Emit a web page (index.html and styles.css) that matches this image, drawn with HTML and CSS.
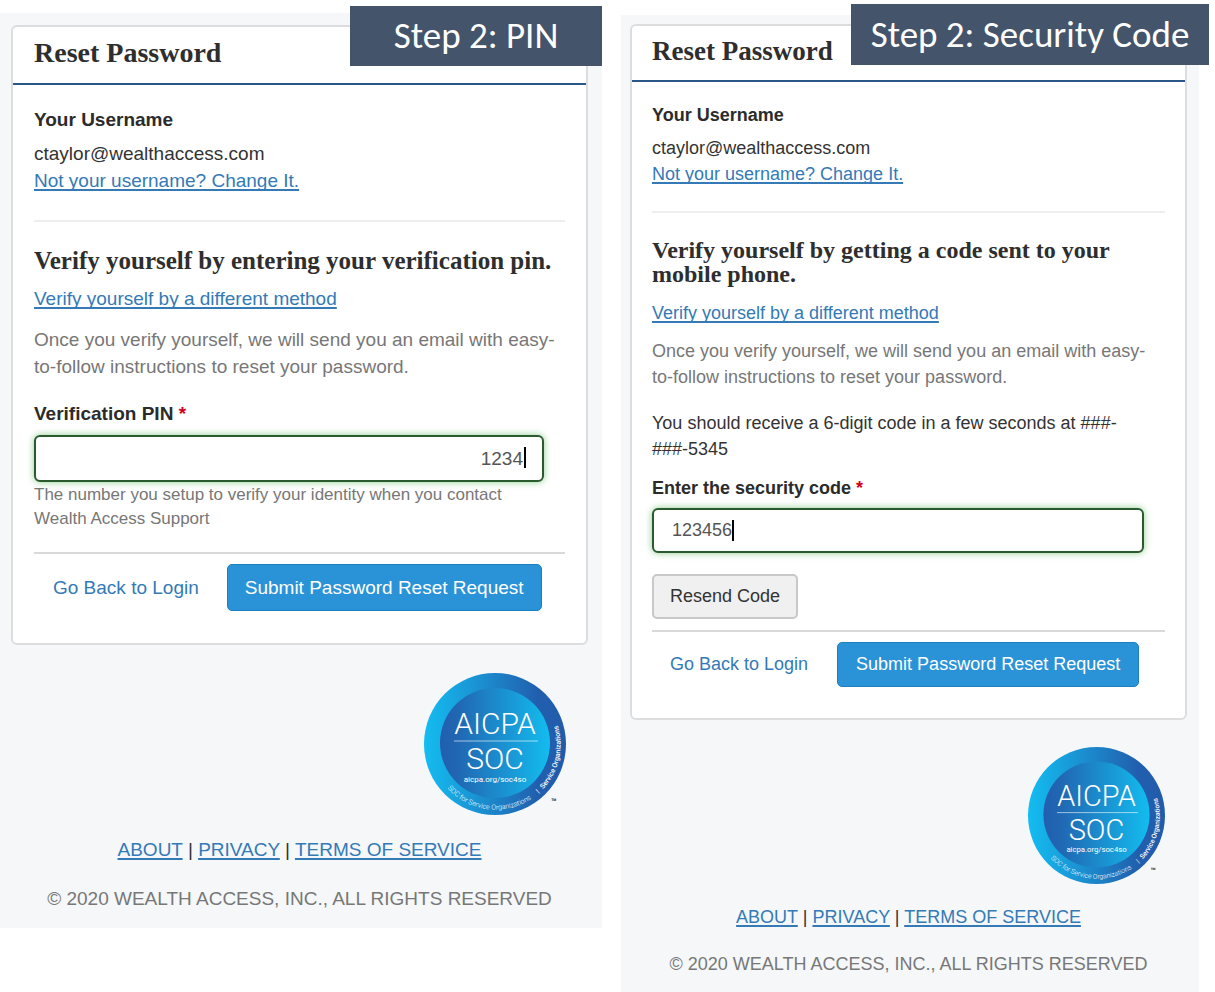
FILE: index.html
```html
<!DOCTYPE html>
<html lang="en">
  <head>
    <meta charset="utf-8">
    <title>Reset Password</title>
    <link rel="stylesheet" href="styles.css">
  </head>
  <body>

    <svg class="defs" aria-hidden="true">
      <defs>
        <linearGradient id="seal-ring">
          <stop offset="0" stop-color="#13bdf1" />
          <stop offset="0.4" stop-color="#1b8fd0" />
          <stop offset="0.8" stop-color="#215fae" />
          <stop offset="1" stop-color="#215cab" />
        </linearGradient>
        <linearGradient id="seal-core">
          <stop offset="0" stop-color="#215fae" />
          <stop offset="0.15" stop-color="#2166b2" />
          <stop offset="1" stop-color="#13bcef" />
        </linearGradient>
        <path id="seal-arc" d="M23.5 115.3 A65 65 0 0 0 130 43" />
        <symbol id="seal" viewBox="0 0 142 142">
          <circle cx="71" cy="71" r="71" fill="url(#seal-ring)" />
          <circle cx="71" cy="70" r="55" fill="url(#seal-core)" />
          <g fill="#fff" font-family="Roboto, sans-serif" text-anchor="middle">
            <text x="71" y="61" font-size="30" font-weight="300">AICPA</text>
            <path d="M30 68h84" stroke="#fff" stroke-opacity="0.6" />
            <text x="71" y="96" font-size="30" font-weight="300">SOC</text>
            <text x="71" y="109" font-size="8">aicpa.org/soc4so</text>
          </g>
          <g fill="#fff" font-family="Roboto, sans-serif" font-size="7">
            <text font-weight="300"><textPath href="#seal-arc">SOC for Service Organizations</textPath></text>
            <text><textPath href="#seal-arc" startOffset="101">|</textPath></text>
            <text font-weight="500"><textPath href="#seal-arc" startOffset="107">Service Organizations</textPath></text>
          </g>
          <text x="127" y="132" fill="#222" font-family="Roboto, sans-serif" font-size="9" font-weight="500">™</text>
        </symbol>
      </defs>
    </svg>

    <main class="steps">

      <section class="panel panel-pin">
        <div class="step-label">Step 2: PIN</div>
        <form class="card">
          <h1 class="card-title">Reset Password</h1>
          <div class="card-body">
            <div class="label">Your Username</div>
            <div class="username">ctaylor@wealthaccess.com</div>
            <a href="#">Not your username? Change It.</a>
            <hr class="divider">
            <h2 class="heading">Verify yourself by entering your verification pin.</h2>
            <a href="#">Verify yourself by a different method</a>
            <p class="muted">Once you verify yourself, we will send you an email with easy-to-follow instructions to reset your password.</p>
            <label class="label" for="pin">Verification PIN <span class="required">*</span></label>
            <div class="field">
              <input class="input" id="pin" type="text" value="1234">
              <span class="caret"></span>
            </div>
            <p class="help">The number you setup to verify your identity when you contact Wealth Access Support</p>
            <div class="actions">
              <a class="button button-link" href="#">Go Back to Login</a>
              <button class="button button-primary" type="button">Submit Password Reset Request</button>
            </div>
          </div>
        </form>
        <svg class="seal" role="img" aria-label="AICPA SOC"><use href="#seal" /></svg>
        <footer class="footer">
          <div><a href="#">ABOUT</a> | <a href="#">PRIVACY</a> | <a href="#">TERMS OF SERVICE</a></div>
          <div class="copyright">© 2020 WEALTH ACCESS, INC., ALL RIGHTS RESERVED</div>
        </footer>
      </section>

      <section class="panel panel-code">
        <div class="step-label">Step 2: Security Code</div>
        <form class="card">
          <h1 class="card-title">Reset Password</h1>
          <div class="card-body">
            <div class="label">Your Username</div>
            <div class="username">ctaylor@wealthaccess.com</div>
            <a href="#">Not your username? Change It.</a>
            <hr class="divider">
            <h2 class="heading">Verify yourself by getting a code sent to your mobile phone.</h2>
            <a href="#">Verify yourself by a different method</a>
            <p class="muted">Once you verify yourself, we will send you an email with easy-to-follow instructions to reset your password.</p>
            <p class="notice">You should receive a 6-digit code in a few seconds at ###-###-5345</p>
            <label class="label" for="code">Enter the security code <span class="required">*</span></label>
            <div class="field">
              <input class="input" id="code" type="text" value="123456">
              <span class="caret"></span>
            </div>
            <button class="button button-default" type="button">Resend Code</button>
            <div class="actions">
              <a class="button button-link" href="#">Go Back to Login</a>
              <button class="button button-primary" type="button">Submit Password Reset Request</button>
            </div>
          </div>
        </form>
        <svg class="seal" role="img" aria-label="AICPA SOC"><use href="#seal" /></svg>
        <footer class="footer">
          <div><a href="#">ABOUT</a> | <a href="#">PRIVACY</a> | <a href="#">TERMS OF SERVICE</a></div>
          <div class="copyright">© 2020 WEALTH ACCESS, INC., ALL RIGHTS RESERVED</div>
        </footer>
      </section>

    </main>

  </body>
</html>
```
FILE: styles.css
```css
* {
  box-sizing: border-box;
}

body {
  margin: 0;
  background: #fff;
  color: #333;
  font-family: "Liberation Sans", Arial, sans-serif;
}

h1, h2, p {
  margin: 0;
}

a {
  color: #337ab7;
  text-decoration: underline;
  text-decoration-thickness: 2px;
  text-decoration-skip-ink: none;
  text-underline-offset: 2px;
}

.defs {
  position: absolute;
  width: 0;
  height: 0;
}

.steps {
  display: grid;
  grid-template-columns: 602fr 578fr;
  align-items: start;
  column-gap: 19px;
  padding-right: 16px;
}

.panel {
  position: relative;
  display: flex;
  flex-direction: column;
  background: #f5f7f9;
}

.panel-pin {
  margin-top: 13px;
  padding: 12px 14px 16px 11px;
  font-size: 19px;
  line-height: 27px;
}

.panel-code {
  margin-top: 15px;
  padding: 9px 12px 16px 9px;
  font-size: 18px;
  line-height: 26px;
}

/* banner over the top right corner of each panel */
.step-label {
  position: absolute;
  top: -7px;
  right: 0;
  width: 252px;
  background: #44546a;
  color: #fff;
  font-family: Carlito, "Open Sans", sans-serif;
  font-size: 37px;
  line-height: 60px;
  text-align: center;
}

.panel-code .step-label {
  top: -11px;
  right: -10px;
  width: 358px;
  line-height: 61px;
}

.card {
  background: #fff;
  border: 2px solid #dcdddf;
  border-radius: 6px;
}

.card-title {
  padding: 0 21px 4px;
  border-bottom: 2px solid #2a5788;
  color: #2e2e2e;
  font-family: "Liberation Serif", serif;
  font-size: 28px;
  line-height: 52px;
}

.panel-code .card-title {
  padding: 0 20px 4px;
  font-size: 27px;
  line-height: 50px;
}

.card-body {
  padding: 21px 21px 32px;
}

.panel-code .card-body {
  padding: 20px 20px 31px;
}

.label {
  display: block;
  font-weight: bold;
  color: #2b2b2b;
}

.username {
  margin-top: 7px;
}

.required {
  color: #d0021b;
}

.divider {
  height: 2px;
  margin: 26px 0;
  border: 0;
  background: #eee;
}

.panel-code .divider {
  margin: 24px 0 25px;
}

.heading {
  margin-bottom: 12px;
  color: #2e2e2e;
  font-family: "Liberation Serif", serif;
  font-size: 25px;
  line-height: 25px;
}

.panel-code .heading {
  margin-bottom: 14px;
  font-size: 24px;
  line-height: 24px;
}

.muted,
.help,
.copyright {
  color: #777;
}

.muted {
  margin: 14px 0 20px;
}

.panel-code .muted {
  margin: 12px 0 20px;
}

.notice {
  margin-bottom: 13px;
}

.field {
  position: relative;
  margin: 8px 21px 0 0;
}

.panel-code .field {
  margin-top: 7px;
}

.input {
  display: block;
  width: 100%;
  height: 47px;
  padding: 0 19px;
  border: 2px solid #2a5a2e;
  border-radius: 6px;
  background: #fff;
  box-shadow: 0 0 7px rgba(60, 170, 60, 0.6);
  color: #555;
  font: inherit;
}

.panel-pin .input {
  text-align: right;
}

.panel-code .input {
  height: 45px;
  padding: 0 18px;
}

.caret {
  position: absolute;
  top: 12px;
  right: 18px;
  width: 2px;
  height: 21px;
  background: #000;
}

.panel-code .caret {
  right: auto;
  left: 80px;
}

.help {
  margin: 1px 21px 0 0;
  font-size: 17px;
  line-height: 24px;
}

.button {
  height: 47px;
  padding: 0 18px;
  border: 1px solid transparent;
  border-radius: 5px;
  font: inherit;
  line-height: 45px;
  white-space: nowrap;
}

.panel-code .button {
  height: 45px;
  padding: 0 17px;
  line-height: 43px;
}

.button-link {
  text-decoration: none;
}

.button-primary {
  border-color: #1b7fc0;
  background: #2a93d7;
  color: #fff;
}

.button-default {
  display: block;
  margin-top: 21px;
  background: #f0f0f0;
  color: #333;
}

.panel-code .button-default {
  padding: 0 16px;
  border: 2px solid #c8c8c8;
  line-height: 41px;
}

.panel-pin .button-primary {
  padding: 0 17px;
}

.panel-code .button-primary {
  padding: 0 18px;
}

.actions {
  display: flex;
  gap: 9px;
  margin-top: 21px;
  padding-top: 10px;
  border-top: 2px solid #d9d9d9;
}

.panel-code .actions {
  gap: 11px;
  margin-top: 11px;
}

.seal {
  align-self: flex-end;
  width: 142px;
  height: 142px;
  margin: 28px 22px 21px 0;
}

.panel-code .seal {
  width: 137px;
  height: 137px;
  margin: 27px 22px 20px 0;
}

.footer {
  text-align: center;
}

.copyright {
  margin-top: 22px;
}

.panel-code .copyright {
  margin-top: 21px;
}
```
